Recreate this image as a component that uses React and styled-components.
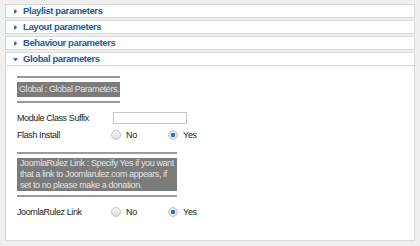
import React from "react";
import styled, { createGlobalStyle } from "styled-components";

const GlobalStyle = createGlobalStyle`
  html, body {
    margin: 0;
    background: #efefef;
  }
  body {
    font-family: "Liberation Sans", Arial, sans-serif;
  }
`;

const collapsed = ["Playlist parameters", "Layout parameters", "Behaviour parameters"];

export default function App() {
  return (
    <>
      <GlobalStyle />
      <Page>
        {collapsed.map((title) => (
          <PanelHeader key={title} title={title} />
        ))}
        <Panel>
          <PanelHeader title="Global parameters" open />
          <PanelBody>
            <Note width={103} single>
              Global : Global Parameters.
            </Note>
            <Rows>
              <Row>
                <Label>Module Class Suffix</Label>
                <TextInput />
              </Row>
              <Row>
                <Label>Flash Install</Label>
                <YesNo value="yes" />
              </Row>
            </Rows>
            <Note width={160}>
              JoomlaRulez Link : Specify Yes if you want that a link to
              Joomlarulez.com appears, if set to no please make a donation.
            </Note>
            <Rows>
              <Row>
                <Label>JoomlaRulez Link</Label>
                <YesNo value="yes" />
              </Row>
            </Rows>
          </PanelBody>
        </Panel>
      </Page>
    </>
  );
}

const PanelHeader = ({ title, open }) => (
  <Header>
    <Arrow viewBox="0 0 6 6">
      {open ? <path d="M0 1.5h6L3 5z" /> : <path d="M1.5 0v6L5 3z" />}
    </Arrow>
    <Title>{title}</Title>
  </Header>
);

const Note = ({ width, single, children }) => (
  <NoteBlock style={{ width }}>
    <NoteBox $single={single}>{children}</NoteBox>
  </NoteBlock>
);

const YesNo = ({ value }) => (
  <Options>
    <Option>
      <Radio $checked={value === "no"} />
      No
    </Option>
    <Option>
      <Radio $checked={value === "yes"} />
      Yes
    </Option>
  </Options>
);

const Page = styled.div`
  display: flex;
  flex-direction: column;
  gap: 2px;
  padding: 4px 5px 6px 5px;
  width: 410px;
`;

const Panel = styled.div`
  display: flex;
  flex-direction: column;
`;

const Header = styled.div`
  display: flex;
  align-items: center;
  height: 12px;
  background: #fff;
  border: 1px solid #d9d9d9;
  padding-left: 7px;
`;

const Arrow = styled.svg`
  width: 5px;
  height: 5px;
  fill: #1d5c9c;
  margin-right: 5px;
`;

const Title = styled.span`
  font-size: 9.5px;
  letter-spacing: -0.4px;
  line-height: 12px;
  font-weight: bold;
  color: #1d5c9c;
`;

const PanelBody = styled.div`
  background: #fff;
  border: 1px solid #d9d9d9;
  border-top: none;
  padding: 10px 11px 20px 11px;
  display: flex;
  flex-direction: column;
`;

const NoteBlock = styled.div`
  border-top: 2px solid #9a9a9a;
  border-bottom: 2px solid #9a9a9a;
  padding: 4px 0;
`;

const NoteBox = styled.div`
  background: #7b7b7b;
  color: #e2e2e2;
  font-size: 9px;
  letter-spacing: -0.4px;
  line-height: 11px;
  padding: ${(p) => (p.$single ? "2px 2px" : "0 3px")};
  white-space: ${(p) => (p.$single ? "nowrap" : "normal")};
  overflow: hidden;
`;

const Rows = styled.div`
  display: flex;
  flex-direction: column;
  margin: 6px 0 9px;
  &:last-child {
    margin-bottom: 0;
  }
`;

const Row = styled.div`
  display: flex;
  align-items: center;
  height: 17px;
`;

const Label = styled.span`
  width: 94px;
  font-size: 9px;
  letter-spacing: -0.4px;
  color: #222;
`;

const TextInput = styled.div`
  width: 72px;
  height: 10px;
  border: 1px solid #c8c8c8;
  margin-left: 2px;
  background: #fff;
`;

const Options = styled.div`
  display: flex;
`;

const Option = styled.label`
  display: flex;
  align-items: center;
  gap: 5px;
  width: 57px;
  font-size: 9px;
  letter-spacing: -0.3px;
  color: #222;
`;

const Radio = styled.span`
  width: 8px;
  height: 8px;
  border-radius: 50%;
  border: 1px solid #c4c4c4;
  background: ${(p) =>
    p.$checked
      ? "radial-gradient(circle, #2f6fb5 0 2px, #dfe6ee 2.5px)"
      : "linear-gradient(#f4f4f4, #dcdcdc)"};
`;
